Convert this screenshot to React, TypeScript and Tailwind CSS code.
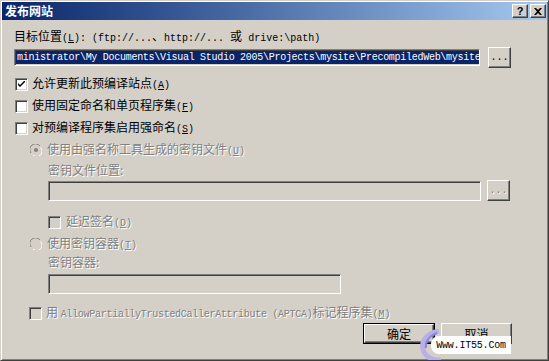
import React from "react";

const cjk = "font-['Noto_Sans_CJK_SC',sans-serif] text-[12px] leading-[14px]";
const mono = "font-['Liberation_Mono',monospace] text-[10px]";
const gray = "text-[#808080] [text-shadow:1px_1px_0_#fff]";
const sunken =
  "border border-t-[#808080] border-l-[#808080] border-b-white border-r-white shadow-[inset_1px_1px_0_#404040,inset_-1px_-1px_0_#d4d0c8]";
const raised =
  "border border-t-white border-l-white border-b-[#404040] border-r-[#404040] shadow-[inset_-1px_-1px_0_#808080] bg-[#d4d0c8]";

function Key({ k }: { k: string }) {
  return (
    <span className={mono}>
      (<span className="underline">{k}</span>)
    </span>
  );
}

function Check({ checked, off }: { checked?: boolean; off?: boolean }) {
  return (
    <div
      className={`w-[13px] h-[13px] shrink-0 flex items-center justify-center ${sunken} ${
        off ? "bg-[#d4d0c8]" : "bg-white"
      }`}
    >
      {checked && (
        <svg width="7" height="7" viewBox="0 0 7 7">
          <path d="M0 2 L0 4 L2 6 L7 1 L7 -1 L2 4 Z" fill="#000" />
        </svg>
      )}
    </div>
  );
}

function Radio({ dot }: { dot?: boolean }) {
  return (
    <svg width="12" height="12" viewBox="0 0 12 12" className="shrink-0">
      <circle cx="6" cy="6" r="5.5" fill="#d4d0c8" />
      <path d="M10 2 A5.5 5.5 0 0 0 1 9" stroke="#808080" fill="none" />
      <path d="M10.5 3.5 A5 5 0 0 1 3 11" stroke="#fff" fill="none" />
      {dot && <circle cx="6" cy="6" r="2" fill="#808080" />}
    </svg>
  );
}

function Browse({ off }: { off?: boolean }) {
  return (
    <div
      className={`w-[23px] h-[21px] flex items-center justify-center ${raised} ${mono} ${
        off ? gray : "text-black"
      }`}
    >
      ...
    </div>
  );
}

function Row({ children, indent }: { children: React.ReactNode; indent: string }) {
  return <div className={`h-[16px] flex items-center ${indent}`}>{children}</div>;
}

export default function App() {
  return (
    <div className="w-[549px] h-[361px] bg-[#d4d0c8] relative overflow-hidden border border-t-[#d4d0c8] border-l-[#d4d0c8] border-b-[#404040] border-r-[#404040] shadow-[inset_1px_1px_0_#fff,inset_-1px_-1px_0_#808080] p-[1px]">
      <div className="h-[18px] flex items-center justify-between pl-[3px] pr-[1px] bg-linear-to-r from-[#0a246a] to-[#a6caf0]">
        <span className={`${cjk} font-bold text-white`}>发布网站</span>
        <div className="flex gap-[2px]">
          <div className={`w-[16px] h-[14px] flex items-center justify-center ${raised} font-['Liberation_Sans',sans-serif] text-[11px] font-bold`}>
            ?
          </div>
          <div className={`w-[16px] h-[14px] flex items-center justify-center ${raised}`}>
            <svg width="8" height="7" viewBox="0 0 8 7">
              <path d="M0 0 L2 0 L4 2 L6 0 L8 0 L5 3.5 L8 7 L6 7 L4 5 L2 7 L0 7 L3 3.5 Z" fill="#000" />
            </svg>
          </div>
        </div>
      </div>

      <div className={`pl-[12px] ${cjk} text-black`}>
        <div className="mt-[9px] h-[14px]">
          目标位置<Key k="L" />
          <span className={mono}>: (ftp://...</span>、<span className={mono}>http://... </span>或
          <span className={mono}> drive:\path)</span>
        </div>

        <div className="mt-[4px] h-[21px] flex items-center gap-[8px]">
          <div className={`w-[466px] h-[17px] bg-white ${sunken} flex items-center px-[1px] overflow-hidden`}>
            <span className={`${mono} tracking-[-0.28px] leading-[13px] bg-[#0a246a] text-white whitespace-nowrap px-[1px]`}>
              ministrator\My Documents\Visual Studio 2005\Projects\mysite\PrecompiledWeb\mysite
            </span>
          </div>
          <Browse />
        </div>

        <div className="mt-[8px] flex flex-col gap-[6px]">
          <Row indent="pl-[1px] gap-[4px]">
            <Check checked />
            <span>
              允许更新此预编译站点<Key k="A" />
            </span>
          </Row>
          <Row indent="pl-[1px] gap-[4px]">
            <Check />
            <span>
              使用固定命名和单页程序集<Key k="F" />
            </span>
          </Row>
          <Row indent="pl-[1px] gap-[4px]">
            <Check />
            <span>
              对预编译程序集启用强命名<Key k="S" />
            </span>
          </Row>
          <Row indent="pl-[16px] gap-[5px]">
            <Radio dot />
            <span className={gray}>
              使用由强名称工具生成的密钥文件<Key k="U" />
            </span>
          </Row>
        </div>

        <div className={`mt-[5px] h-[14px] pl-[34px] ${gray}`}>密钥文件位置:</div>
        <div className="mt-[3px] h-[21px] pl-[34px] flex items-center gap-[6px]">
          <div className={`w-[433px] h-[20px] bg-[#d4d0c8] ${sunken}`} />
          <Browse off />
        </div>

        <div className="mt-[13px]">
          <Row indent="pl-[34px] gap-[5px]">
            <Check off />
            <span className={gray}>
              延迟签名<Key k="D" />
            </span>
          </Row>
        </div>
        <div className="mt-[6px]">
          <Row indent="pl-[16px] gap-[5px]">
            <Radio />
            <span className={gray}>
              使用密钥容器<Key k="T" />
            </span>
          </Row>
        </div>
        <div className={`mt-[3px] h-[14px] pl-[34px] ${gray}`}>密钥容器:</div>
        <div className="mt-[5px] pl-[34px]">
          <div className={`w-[293px] h-[20px] bg-[#d4d0c8] ${sunken}`} />
        </div>

        <div className="mt-[11px]">
          <Row indent="pl-[15px] gap-[4px]">
            <Check off />
            <span className={gray}>
              用 <span className={`${mono} tracking-[-0.28px]`}>AllowPartiallyTrustedCallerAttribute (APTCA)</span>
              标记程序集<Key k="M" />
            </span>
          </Row>
        </div>

        <div className="mt-[2px] w-[498px] flex justify-end gap-[6px]">
          <div className="border border-black">
            <div className={`w-[70px] h-[19px] flex items-center justify-center ${raised}`}>确定</div>
          </div>
          <div className={`w-[71px] h-[21px] flex items-center justify-center ${raised}`}>取消</div>
        </div>
      </div>

      <div className="absolute left-[418px] top-[328px] w-[94px] h-[33px]">
        <svg width="30" height="33" viewBox="0 0 30 33" className="absolute left-0 top-0">
          <path d="M20 2 C8 4 2 12 4 20 C6 28 14 32 22 31" stroke="#b8b0e8" strokeWidth="5" fill="none" />
          <path d="M18 4 C10 7 6 13 7 19" stroke="#8f86d8" strokeWidth="2" fill="none" />
        </svg>
        <div className="absolute left-[12px] top-[7px] w-[80px] h-[18px] bg-white rounded-l-[8px] flex items-center justify-center font-['Liberation_Mono',monospace] text-[10px] text-black tracking-[-0.2px]">
          Www.IT55.Com
        </div>
      </div>
    </div>
  );
}
